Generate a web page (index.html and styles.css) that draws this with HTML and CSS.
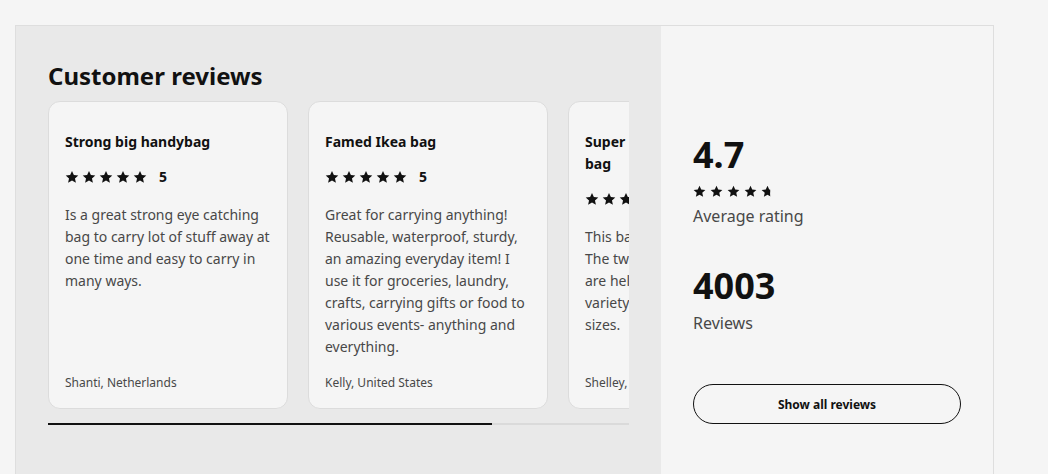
FILE: index.html
```html
<!DOCTYPE html>
<html lang="en">
<head>
<meta charset="utf-8">
<link rel="stylesheet" href="styles.css">
</head>
<body>
<svg width="0" height="0" class="defs">
  <defs>
    <symbol id="star" viewBox="0 0 24 24"><path d="M12 1.5l3.2 7 7.6.8-5.7 5.1 1.6 7.5L12 18.1 5.3 21.9l1.6-7.5L1.2 9.3l7.6-.8z"/></symbol>
    <clipPath id="part"><rect x="0" y="0" width="17" height="24"/></clipPath>
  </defs>
</svg>
<section class="reviews">
  <div class="left">
    <h2 class="heading">Customer reviews</h2>
    <div class="viewport">
      <div class="track">
        <article class="card">
          <h3 class="title">Strong big handybag</h3>
          <div class="rating">
            <span class="stars"><svg><use href="#star"/></svg><svg><use href="#star"/></svg><svg><use href="#star"/></svg><svg><use href="#star"/></svg><svg><use href="#star"/></svg></span>
            <span class="score">5</span>
          </div>
          <p class="body">Is a great strong eye catching bag to carry lot of stuff away at one time and easy to carry in many ways.</p>
          <p class="author">Shanti, Netherlands</p>
        </article>
        <article class="card">
          <h3 class="title">Famed Ikea bag</h3>
          <div class="rating">
            <span class="stars"><svg><use href="#star"/></svg><svg><use href="#star"/></svg><svg><use href="#star"/></svg><svg><use href="#star"/></svg><svg><use href="#star"/></svg></span>
            <span class="score">5</span>
          </div>
          <p class="body">Great for carrying anything! Reusable, waterproof, sturdy, an amazing everyday item! I use it for groceries, laundry, crafts, carrying gifts or food to various events- anything and everything.</p>
          <p class="author">Kelly, United States</p>
        </article>
        <article class="card">
          <h3 class="title">Super strong and sturdy big bag</h3>
          <div class="rating">
            <span class="stars"><svg><use href="#star"/></svg><svg><use href="#star"/></svg><svg><use href="#star"/></svg><svg><use href="#star"/></svg><svg><use href="#star"/></svg></span>
            <span class="score">5</span>
          </div>
          <p class="body">This bag is really useful to me. The two sets of handle straps are helpful for carrying a variety of items in different sizes.</p>
          <p class="author">Shelley, United States</p>
        </article>
      </div>
    </div>
    <div class="scrollbar"><div class="thumb"></div></div>
  </div>
  <aside class="right">
    <div class="big">4.7</div>
    <div class="avg-stars">
      <svg><use href="#star"/></svg><svg><use href="#star"/></svg><svg><use href="#star"/></svg><svg><use href="#star"/></svg><svg viewBox="0 0 24 24"><g clip-path="url(#part)"><use href="#star"/></g></svg>
    </div>
    <div class="label">Average rating</div>
    <div class="big count">4003</div>
    <div class="label label-tight">Reviews</div>
    <button class="btn">Show all reviews</button>
  </aside>
</section>
</body>
</html>
```
FILE: styles.css
```css
* { box-sizing: border-box; }
html, body { margin: 0; padding: 0; }
body {
  background: #f5f5f5;
  font-family: "Noto Sans", "Open Sans", sans-serif;
  color: #111;
  height: 474px;
  overflow: hidden;
}
.defs { position: absolute; width: 0; height: 0; }
.reviews {
  display: flex;
  margin: 25px 0 0 15px;
  width: 979px;
  height: 470px;
  border: 1px solid #dedede;
  border-bottom: none;
}
.left {
  flex: 0 0 645px;
  background: #e9e9e9;
  padding: 35px 32px 0 32px;
}
.heading {
  margin: 0 0 10px;
  font-size: 24px;
  line-height: 30px;
  font-weight: 700;
  color: #111;
}
.viewport {
  width: 581px;
  overflow: hidden;
}
.track {
  display: flex;
  gap: 20px;
  width: max-content;
}
.card {
  width: 240px;
  background: #f5f5f5;
  border: 1px solid #dcdcdc;
  border-radius: 12px;
  padding: 29px 16px 16px;
  display: flex;
  flex-direction: column;
}
.title {
  margin: 0;
  font-size: 14px;
  line-height: 22px;
  font-weight: 700;
  color: #111;
}
.rating {
  display: flex;
  align-items: center;
  margin-top: 16px;
  height: 16px;
}
.stars { display: flex; gap: 3px; }
.stars svg { width: 14px; height: 14px; fill: #111; }
.score {
  margin-left: 12px;
  font-size: 14px;
  font-weight: 700;
  line-height: 16px;
}
.body {
  margin: 19px 0 0;
  font-size: 14px;
  line-height: 22px;
  color: #484848;
  flex: 1;
}
.author {
  margin: 16px 0 0;
  font-size: 12px;
  line-height: 18px;
  color: #484848;
}
.scrollbar {
  margin-top: 14px;
  width: 581px;
  height: 2px;
  background: #dadada;
}
.thumb {
  width: 444px;
  height: 2px;
  background: #111;
}
.right {
  flex: 1;
  background: #f5f5f5;
  padding: 107px 32px 0;
  display: flex;
  flex-direction: column;
  align-items: stretch;
}
.big {
  font-size: 36px;
  line-height: 44px;
  font-weight: 700;
  color: #111;
}
.avg-stars {
  display: flex;
  gap: 4px;
  margin-top: 8px;
  height: 13px;
}
.avg-stars svg { width: 13px; height: 13px; fill: #111; }
.label {
  font-size: 16px;
  line-height: 24px;
  color: #484848;
  margin-top: 6px;
}
.label-tight { margin-top: 3px; }
.count { margin-top: 36px; }
.btn {
  margin-top: 49px;
  height: 40px;
  width: 100%;
  border: 1px solid #111;
  border-radius: 20px;
  background: transparent;
  font-family: "Noto Sans", "Open Sans", sans-serif;
  font-size: 12px;
  font-weight: 700;
  color: #111;
}
```
